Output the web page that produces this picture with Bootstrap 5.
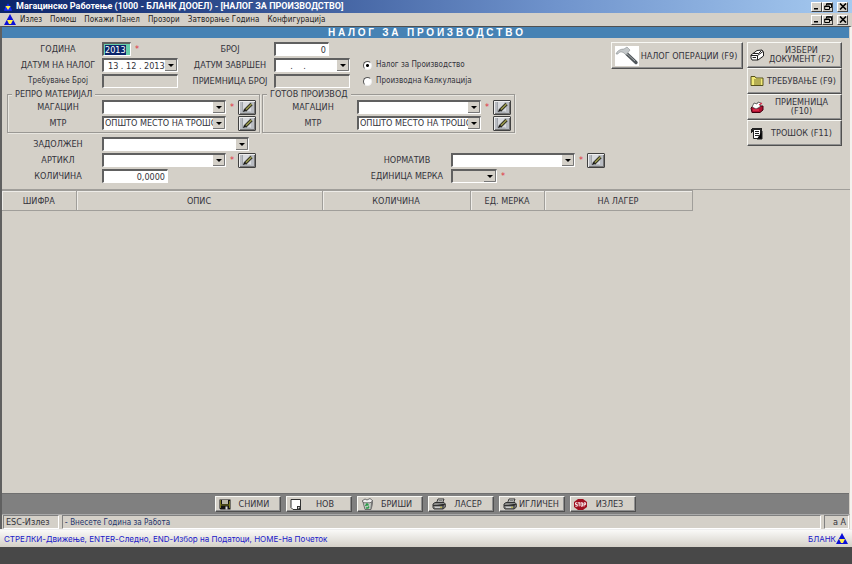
<!DOCTYPE html>
<html lang="mk">
<head>
<meta charset="utf-8">
<meta name="viewport" content="width=device-width, initial-scale=1">
<title>Магацинско Работење</title>
<link rel="stylesheet" href="https://cdn.jsdelivr.net/npm/bootstrap@5.3.0/dist/css/bootstrap.min.css">
<script src="https://cdn.jsdelivr.net/npm/bootstrap@5.3.0/dist/js/bootstrap.bundle.min.js"></script>
<style>
:root{--face:#d4d0c8;--hi:#f4f2ee;--sh:#808080;--dk:#404040}
body{font-family:"DejaVu Sans Condensed","DejaVu Sans",sans-serif;font-size:9px;line-height:12px;color:#33333b;background:#484848}
button,input,select{font:inherit;color:inherit}
.titlebar{background:linear-gradient(90deg,#0a246a,#2c4a8c 25%,#6f93cc 65%,#a6caf0);color:#fff;font:bold 9px/13px Roboto,sans-serif;height:13px}
.menubar{background:var(--face);font-size:8px;line-height:13px;height:13px}
.menubar a{color:#222;text-decoration:none}
.frame{background:var(--face);border-left:2px solid #606060;border-right:2px solid var(--hi);border-top:1px solid #505050}
.heading{background:#4682b4;color:#fff;font-family:"Liberation Sans",Arial,sans-serif;font-size:10px;line-height:11px;font-weight:bold;white-space:pre;text-align:center;margin:0 1px 0 0}
.winbtn{width:11px;height:10px;padding:0;border:1px solid;border-color:#fff var(--dk) var(--dk) #fff;background:var(--face);display:flex;align-items:center;justify-content:center}
.winbtn svg{display:block}
.fld{height:14px;padding:0 2px;border:1px solid;border-color:#606060 #fff #fff #606060;border-top-width:2px;border-left-width:2px;background-color:#fff;border-radius:0;outline:0;line-height:11px;min-width:0}
.off,.fld:disabled{background-color:var(--face);opacity:1}
.drop{appearance:none;padding:0 12px 0 1px;background-repeat:no-repeat;background-position:right center;background-image:url("data:image/svg+xml,%3Csvg xmlns='http://www.w3.org/2000/svg' width='12' height='11'%3E%3Cpath fill='%23d4d0c8' d='M0 0h12v11H0z'/%3E%3Cpath stroke='%23777' fill='none' d='M11.5 0v10.5H0'/%3E%3Cpath d='M3 4h6L6 7z'/%3E%3C/svg%3E")}
.date{padding-left:4px;white-space:pre}
.w-year{width:29px;padding:0 1px;background:#66cdaa}
.w-year::selection{background:#0a246a;color:#fff}
.w-mid{width:76px}.w-num{width:55px}.w-qty{width:66px}.w-unit{width:46px}.w-combo{width:124px}.w-long{width:147px}
.top-grid{display:grid;grid-template-columns:88px 84px 88px 89px auto;grid-auto-rows:16px;align-items:center;padding:3px 0 0 12px}
.low-grid{display:grid;grid-template-columns:88px 261px 88px auto;grid-auto-rows:16px;align-items:center;padding:3px 0 5px 12px}
.lbl{text-align:center;white-space:nowrap}
.star{color:#e03040;width:12px;text-align:center;line-height:14px}
.groups{padding-left:5px;gap:2px}
.group-box{width:253px;border:1px solid #9a9894;box-shadow:inset 1px 1px 0 #e8e6e0,1px 1px 0 #e8e6e0;height:39px;position:relative;padding:4px 0 0 6px;margin-top:5px}
.group-box legend{position:absolute;top:-7px;left:4px;width:auto;font-size:9px;line-height:12px;margin:0;padding:0 3px;background:var(--face);float:none}
.field-row{display:grid;grid-template-columns:88px auto;height:16px;align-items:center}
.edit{width:18px;height:15px;padding:0;border:1px solid #404040;border-radius:1px;background:#b9bcc2;box-shadow:inset 1px 1px 0 #eee,inset -1px -1px 0 #777;display:flex;align-items:center;justify-content:center}
.raised{background:var(--face);border:1px solid;border-color:#f8f8f4 #505050 #505050 #f8f8f4;box-shadow:inset -1px -1px 0 #909090;padding:0 4px;display:flex;align-items:center;color:#33333b}
.raised span{flex:1;text-align:center;white-space:nowrap}
.raised svg{flex:none}
.act-col{width:95px}
.act-col .raised{height:26px;line-height:9px;padding:0 2px}
.act-big{height:27px;width:132px;padding:0 3px}
.opt{width:9px;height:9px;margin:0 4px 0 0;appearance:none;border:1px solid;border-color:#555 #eee #eee #555;border-radius:50%;background:#fff;flex:none}
.opt:checked{background:radial-gradient(#000 0 1px,#fff 2px)}
.opt-label{white-space:nowrap}
.mixed{font-size:8px;line-height:12px}
.stock{table-layout:fixed;width:690px;border-collapse:collapse}
.stock th{height:20px;font-weight:normal;text-align:center;border:1px solid #a09e9a;border-left-width:0;box-shadow:inset 1px 1px 0 #eeece8;padding:0}
.sheet{border-top:1px solid #a09e9a}
.toolbar-x{background:#808080;height:21px;gap:5px;margin-right:1px;border-top:1px solid #707070}
.toolbar-x .raised{width:66px;height:16px;padding:0 3px}
.status{height:15px;gap:3px;border-top:1px solid #aaa;padding:0 1px}
.pane{border:1px solid;border-color:#808080 #fff #fff #808080;padding:0 2px;line-height:12px;white-space:nowrap}
.note{color:#24346a}
.hint{background:linear-gradient(#fafaf8,#d4d0c8);color:#2018c8;height:18px;border-top:1px solid #eee;font:8px/16px Inter,sans-serif}
.desk{height:17px}
</style>
</head>
<body>
<svg class="d-none">
<defs>
<symbol id="logo" viewBox="0 0 12 11"><path fill="#0c10d8" d="M6 0l6 11H0z"/><path fill="#fff04a" d="M3 6h6l-2 4H5z"/></symbol>
<symbol id="logo-dark" viewBox="0 0 12 11"><path fill="#1428ff" d="M6 0l3 5h1l2 6H0l2-6h1z"/><path fill="#fff04a" d="M2 4h8L6 10z"/></symbol>
<symbol id="w-min" viewBox="0 0 8 7"><path fill="#000" d="M1 5h4v1.500H1z"/></symbol>
<symbol id="w-res" viewBox="0 0 8 7"><path fill="none" stroke="#000" d="M2.500 2.500V.7h5v3.800H6M.7 3h4.800v3.500H.7zM2.500 1.200h5M.7 3.500h5"/></symbol>
<symbol id="w-x" viewBox="0 0 8 7"><path stroke="#000" stroke-width="1.600" d="M1 .5l6 6M7 .5l-6 6"/></symbol>
<symbol id="pen" viewBox="0 0 14 12"><path fill="#d8dade" d="M2 1h7l2 2v8H2z"/><path fill="none" stroke="#a0a4aa" d="M2.500 1v10h8"/><path stroke="#2c2c24" stroke-width="3.200" d="M5 9.500L11.500 3"/><path stroke="#98984a" stroke-width="1.600" d="M6 8.500L11.500 3"/><path fill="#111" d="M3 11l1-3 2 2z"/></symbol>
<symbol id="printer" viewBox="0 0 14 12"><path fill="#e8e8e4" stroke="#333" d="M4.500 5L6 1h6l-1.500 4"/><path stroke="#555" stroke-width=".7" d="M6.500 2.500h4M6 4h4"/><path fill="#8a8a88" stroke="#333" d="M1 6l2-1.500h9L13.300 6v3l-2 2H2L1 9.500z"/><path stroke="#333" d="M1 7.500h10l2-1.500M11 7.500V11"/><path stroke="#ddd" d="M3 9.300h5"/><path stroke="#c8c040" d="M8 9.300h2"/></symbol>
<symbol id="docs" viewBox="0 0 14 12"><path fill="#fff" stroke="#222" d="M1 6l6-4.500 5-.5 1.500 2v4L8 11H2L1 9z"/><path fill="none" stroke="#222" d="M1 6.500h6.500L13 2.500M7.500 6.500V11M3 4.500h5.500l3-3M2.500 8.500H6"/></symbol>
<symbol id="folder" viewBox="0 0 14 12"><path fill="#f2ea78" stroke="#55501c" d="M1 10.500v-9h4l1 1.500h7v7.500z"/><path stroke="#77702c" d="M4 5h7M4 7h7M4 9h7"/></symbol>
<symbol id="receipt" viewBox="0 0 14 12"><path fill="#b01030" stroke="#400010" d="M1 7l2-2h10v4l-3 2.500H2z"/><path fill="#fff" stroke="#333" stroke-width=".7" d="M2 6l2-4 3 1 1-2 3 1-1 4-4 2z"/><path fill="none" stroke="#e03050" stroke-width="1.300" d="M9 4l3-2M3 9h6"/></symbol>
<symbol id="cost" viewBox="0 0 14 13"><path fill="#222" d="M2 1h10v4H2z"/><path fill="#fff" stroke="#222" d="M3.500 2.500h7v9h-7z"/><path stroke="#222" d="M5 4.500h4M5 6.500h4M5 8.500h4M1.500 2v4M12 4v8H7"/></symbol>
<symbol id="disk" viewBox="0 0 12 11"><path fill="#111" d="M.5.5h11v10H1.500l-1-1z"/><path fill="#b8b4a4" d="M3 1h6v4H3z"/><path fill="#77751c" d="M1 1h1v8H1zM10 2h1v7h-1zM2 5.500h8v1H2z"/><path fill="#ddd" d="M6.500 7.500h2v3h-2z"/></symbol>
<symbol id="page" viewBox="0 0 12 11"><path fill="#fff" stroke="#333" d="M1 .5h9.500v10H3l-2-2z"/><path fill="#333" d="M7 11V7h4v4z"/><path fill="#ddd" d="M8 8h2l-2 2z"/></symbol>
<symbol id="bin" viewBox="0 0 13 12"><path fill="#c8cec8" stroke="#555" stroke-width=".8" d="M2 4l8-1 1.500 1L10 11.500H4z"/><path fill="#eee" stroke="#555" stroke-width=".8" d="M1 3l3-2 2 1 3-1.500L12 3l-3 1.800H3z"/><path fill="#777" d="M10 4l2-1-1 7-1.500 1z"/><path fill="none" stroke="#2a9a48" stroke-width="1.500" d="M4.500 8L6 6l1.500 1.500M8 8.500l-1 1.500H4.800"/></symbol>
<symbol id="stop" viewBox="0 0 13 11"><path fill="#a01020" d="M4 0h5l4 3v5l-4 3H4L0 8V3z"/><path fill="none" stroke="#fff" stroke-width=".9" d="M3.500 3.800h-2v1.700h1.800v1.700H1.300M4 3.800h2.400M5.200 3.800v3.600M7 3.800h1.600v3.400H7zM10 7.500V3.800h1.600v1.900H10"/></symbol>
<symbol id="hammer" viewBox="0 0 24 20"><path fill="#fff" d="M0 0h24v20H0z"/><path stroke="#50565a" stroke-width="3.400" stroke-linecap="round" d="M12 8l9 8.500"/><path stroke="#a8adb0" stroke-width="1" d="M11 7l9 8"/><path fill="#c4c8ca" stroke="#8c9092" stroke-width=".6" d="M1 8c1-3 4-5 8-5l3-2 3 3-4 5-2-2c-3-2-5-1-6 1z"/></symbol>
</defs>
</svg>
<div class="d-flex flex-column min-vh-100">
<header>
<div class="titlebar d-flex align-items-center px-1">
<svg width="8" height="10"><use href="#logo-dark"/></svg>
<span class="flex-grow-1 ps-1 text-nowrap overflow-hidden">Магацинско Работење (1000 - БЛАНК ДООЕЛ) - [НАЛОГ ЗА ПРОИЗВОДСТВО]</span>
<button class="winbtn" aria-label="Минимизирај"><svg width="8" height="7"><use href="#w-min"/></svg></button>
<button class="winbtn" aria-label="Врати"><svg width="8" height="7"><use href="#w-res"/></svg></button>
<button class="winbtn ms-1" aria-label="Затвори"><svg width="8" height="7"><use href="#w-x"/></svg></button>
</div>
<nav class="menubar d-flex align-items-center px-1">
<svg width="12" height="11" class="me-1"><use href="#logo"/></svg>
<div class="d-flex flex-grow-1 gap-2 text-nowrap"><a href="#">Излез</a><a href="#">Помош</a><a href="#">Покажи Панел</a><a href="#">Прозори</a><a href="#">Затворање Година</a><a href="#">Конфигурација</a></div>
<button class="winbtn" aria-label="Минимизирај прозорец"><svg width="8" height="7"><use href="#w-min"/></svg></button>
<button class="winbtn" aria-label="Врати прозорец"><svg width="8" height="7"><use href="#w-res"/></svg></button>
<button class="winbtn ms-1" aria-label="Затвори прозорец"><svg width="8" height="7"><use href="#w-x"/></svg></button>
</nav>
</header>
<main class="frame flex-grow-1 d-flex flex-column">
<h1 class="heading">Н А Л О Г   З А   П Р О И З В О Д С Т В О</h1>
<form class="d-flex justify-content-between">
<div>
<div class="top-grid">
<label class="lbl" for="god">ГОДИНА</label><div class="d-flex"><input id="god" class="fld w-year" value="2013"><span class="star">*</span></div>
<label class="lbl" for="broj">БРОЈ</label><input id="broj" class="fld w-num text-end" value="0"><span></span>
<label class="lbl" for="dn">ДАТУМ НА НАЛОГ</label><input id="dn" class="fld drop date w-mid" value="13 . 12 . 2013">
<label class="lbl" for="dz">ДАТУМ ЗАВРШЕН</label><input id="dz" class="fld drop date w-mid" value="    .    .">
<label class="d-flex align-items-center opt-label mixed"><input class="opt" type="radio" name="vid" checked>Налог за Производство</label>
<label class="lbl mixed" for="tb">Требување Број</label><input id="tb" class="fld off w-mid" disabled>
<label class="lbl" for="pb">ПРИЕМНИЦА БРОЈ</label><input id="pb" class="fld off w-mid" disabled>
<label class="d-flex align-items-center opt-label mixed"><input class="opt" type="radio" name="vid">Производна Калкулација</label>
</div>
<div class="d-flex groups">
<fieldset class="group-box"><legend>РЕПРО МАТЕРИЈАЛ</legend>
<div class="field-row"><label class="lbl" for="m1">МАГАЦИН</label><div class="d-flex align-items-center"><select id="m1" class="fld drop w-combo"><option></option></select><span class="star">*</span><button type="button" class="edit" aria-label="Уреди магацин"><svg width="14" height="12"><use href="#pen"/></svg></button></div></div>
<div class="field-row"><label class="lbl" for="t1">МТР</label><div class="d-flex align-items-center"><select id="t1" class="fld drop w-combo"><option>ОПШТО МЕСТО НА ТРОШОК</option></select><span class="star"></span><button type="button" class="edit" aria-label="Уреди МТР"><svg width="14" height="12"><use href="#pen"/></svg></button></div></div>
</fieldset>
<fieldset class="group-box"><legend>ГОТОВ ПРОИЗВОД</legend>
<div class="field-row"><label class="lbl" for="m2">МАГАЦИН</label><div class="d-flex align-items-center"><select id="m2" class="fld drop w-combo"><option></option></select><span class="star">*</span><button type="button" class="edit" aria-label="Уреди магацин"><svg width="14" height="12"><use href="#pen"/></svg></button></div></div>
<div class="field-row"><label class="lbl" for="t2">МТР</label><div class="d-flex align-items-center"><select id="t2" class="fld drop w-combo"><option>ОПШТО МЕСТО НА ТРОШОК</option></select><span class="star"></span><button type="button" class="edit" aria-label="Уреди МТР"><svg width="14" height="12"><use href="#pen"/></svg></button></div></div>
</fieldset>
</div>
<div class="low-grid">
<label class="lbl" for="zd">ЗАДОЛЖЕН</label><select id="zd" class="fld drop w-long"><option></option></select><span></span><span></span>
<label class="lbl" for="ar">АРТИКЛ</label><div class="d-flex align-items-center"><select id="ar" class="fld drop w-combo"><option></option></select><span class="star">*</span><button type="button" class="edit" aria-label="Уреди артикл"><svg width="14" height="12"><use href="#pen"/></svg></button></div>
<label class="lbl" for="nr">НОРМАТИВ</label><div class="d-flex align-items-center"><select id="nr" class="fld drop w-combo"><option></option></select><span class="star">*</span><button type="button" class="edit" aria-label="Уреди норматив"><svg width="14" height="12"><use href="#pen"/></svg></button></div>
<label class="lbl" for="kl">КОЛИЧИНА</label><input id="kl" class="fld w-qty text-end" value="0,0000">
<label class="lbl" for="em">ЕДИНИЦА МЕРКА</label><div class="d-flex align-items-center"><select id="em" class="fld drop off w-unit"><option></option></select><span class="star">*</span></div>
</div>
</div>
<div class="d-flex align-items-start gap-1 pt-1 pe-2">
<button type="button" class="raised act-big"><svg width="24" height="20"><use href="#hammer"/></svg><span>НАЛОГ ОПЕРАЦИИ (F9)</span></button>
<div class="act-col d-flex flex-column">
<button type="button" class="raised"><svg width="14" height="12"><use href="#docs"/></svg><span>ИЗБЕРИ<br>ДОКУМЕНТ (F2)</span></button>
<button type="button" class="raised"><svg width="14" height="12"><use href="#folder"/></svg><span>ТРЕБУВАЊЕ (F9)</span></button>
<button type="button" class="raised"><svg width="14" height="12"><use href="#receipt"/></svg><span>ПРИЕМНИЦА<br>(F10)</span></button>
<button type="button" class="raised"><svg width="14" height="13"><use href="#cost"/></svg><span>ТРОШОК (F11)</span></button>
</div>
</div>
</form>
<div class="sheet flex-grow-1">
<table class="stock"><colgroup><col style="width:74px"><col style="width:246px"><col style="width:148px"><col style="width:74px"><col style="width:148px"></colgroup>
<thead><tr><th>ШИФРА</th><th>ОПИС</th><th>КОЛИЧИНА</th><th>ЕД. МЕРКА</th><th>НА ЛАГЕР</th></tr></thead></table>
</div>
<div class="toolbar-x d-flex justify-content-center align-items-center">
<button class="raised"><svg width="12" height="11"><use href="#disk"/></svg><span>СНИМИ</span></button>
<button class="raised"><svg width="12" height="11"><use href="#page"/></svg><span>НОВ</span></button>
<button class="raised"><svg width="13" height="12"><use href="#bin"/></svg><span>БРИШИ</span></button>
<button class="raised"><svg width="14" height="12"><use href="#printer"/></svg><span>ЛАСЕР</span></button>
<button class="raised"><svg width="14" height="12"><use href="#printer"/></svg><span>ИГЛИЧЕН</span></button>
<button class="raised"><svg width="13" height="11"><use href="#stop"/></svg><span>ИЗЛЕЗ</span></button>
</div>
<div class="status d-flex">
<div class="pane pe-2">ESC-Излез</div><div class="pane flex-grow-1 note">- <span class="mixed">Внесете Година за Работа</span></div><div class="pane ps-2">а А</div>
</div>
</main>
<footer>
<div class="hint d-flex align-items-center justify-content-between px-1"><span>СТРЕЛКИ-Движење, ENTER-Следно, END-Избор на Податоци, HOME-На Почеток</span><span class="d-flex align-items-center">БЛАНК<svg width="12" height="11"><use href="#logo"/></svg></span></div>
<div class="desk"></div>
</footer>
</div>
<script>
const year=document.getElementById('god');year.focus();year.select();
</script>
</body>
</html>
